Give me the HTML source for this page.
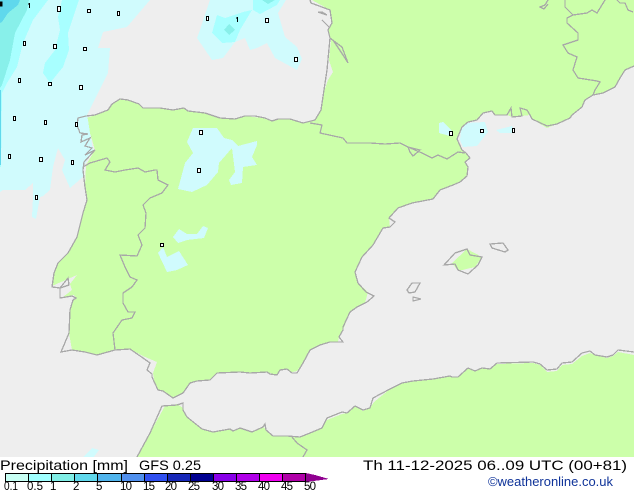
<!DOCTYPE html>
<html><head><meta charset="utf-8"><style>
html,body{margin:0;padding:0;background:#fff}
svg{display:block}
text{font-family:"Liberation Sans",sans-serif;fill:#000}
</style></head><body>
<svg width="634" height="490" viewBox="0 0 634 490" xmlns="http://www.w3.org/2000/svg">
<rect width="634" height="458" fill="#eeeeee"/>
<g shape-rendering="crispEdges">
<!-- land -->
<polygon fill="#ccffaa" points="312,0 330,10 332,23 328,30 331,40 329,60 333,72 328,80 324,92 321,110 315,120 303,123 290,119 278,119 272,121 262,118 245,116 235,119 220,118 205,113 188,111 184,108 173,110 160,108 143,108 139,104 128,100 120,99 112,104 108,110 95,115 86,118 90,133 95,150 86,165 85,187 87,200 83,213 77,237 68,253 58,263 54,273 52,286 77,275 70,284 72,290 63,297 74,295 76,298 73,300 70,310 69,333 72,350 85,352 97,355 115,350 130,349 143,356 157,362 153,373 155,385 158,390 163,391 173,397 183,393 190,383 197,381 210,380 217,373 240,372 250,373 267,372 277,375 280,370 287,369 292,372 297,371 303,363 310,350 320,345 330,342 338,342 339,337 343,330 345,325 350,312 357,307 365,303 368,292 358,283 355,272 362,257 373,245 383,228 390,227 389,218 398,208 412,203 433,199 440,190 453,185 460,182 467,176 468,167 465,162 470,158 466,153 462,150 457,139 462,127 468,122 477,120 484,112 492,111 495,115 507,115 512,117 522,116 530,115 532,119 547,128 557,124 570,118 572,115 582,107 585,100 593,95 603,93 615,87 620,78 625,70 634,66 634,0"/>
<!-- africa -->
<polygon fill="#ccffaa" points="137,458 150,433 165,406 177,404 183,408 187,417 202,429 213,432 230,429 233,431 240,428 252,432 263,427 266,430 273,436 287,436 300,437 310,433 322,428 327,420 342,414 347,413 355,406 363,411 370,408 374,402 390,389 402,383 413,381 433,379 450,376 452,377 458,377 468,368 475,371 482,368 490,369 497,364 533,363 540,365 547,372 557,371 562,365 572,364 582,356 590,353 595,355 607,358 613,356 618,352 634,355 634,458"/>
<!-- mallorca -->
<polygon fill="#ccffaa" points="452,263 467,249 482,257 475,267 458,271"/>
<!-- precip lightest -->
<polygon fill="#d0fbfd" points="150,0 127,27 103,32 98,48 110,48 108,73 87,115 88,120 90,133 93,150 83,167 83,177 70,188 62,170 65,160 58,148 53,167 50,190 43,196 40,197 36,219 32,217 33,197 33,183 25,190 3,190 0,192 0,0"/>
<polygon fill="#d0fbfd" points="210,0 200,30 197,38 212,60 223,58 235,42 245,38 250,50 257,48 267,43 275,58 297,70 302,59 297,47 285,37 278,13 286,0"/>
<polygon fill="#d0fbfd" points="193,128 217,128 224,138 232,140 238,146 257,141 257,145 252,157 257,165 243,167 242,183 231,185 229,180 235,172 232,148 219,163 218,172 207,185 192,192 178,189 185,163 193,153 187,142"/>
<polygon fill="#d0fbfd" points="179,229 187,234 197,234 203,226 208,228 204,238 187,240 178,243 173,237"/>
<polygon fill="#d0fbfd" points="163,247 167,257 179,251 188,265 177,270 167,272 158,253"/>
<polygon fill="#d0fbfd" points="439,123 443,122 452,131 450,136 439,133"/>
<polygon fill="#d0fbfd" points="461,130 467,123 485,122 488,132 477,146 463,147 460,140"/>
<polygon fill="#d0fbfd" points="496,130 512,126 515,133 500,133"/>
<polygon fill="#d0fbfd" points="82,458 92,448 99,450 93,458"/>
<!-- level 2 -->
<polygon fill="#a8ffff" points="48,0 33,20 23,43 17,67 7,83 2,93 1,167 0,167 0,0"/>
<polygon fill="#a8ffff" points="79,0 68,33 69,50 63,67 50,83 43,73 45,63 55,50 60,30 58,17 62,0"/>
<polygon fill="#a8ffff" points="212,33 217,15 225,18 243,12 252,10 240,30 235,42 222,43"/>
<polygon fill="#a8ffff" points="253,0 280,0 277,5 260,14 253,10"/>
<!-- level 3 -->
<polygon fill="#88f0ea" points="29,0 27,10 15,33 10,60 2,85 0,88 0,0"/>
<polygon fill="#88f0ea" points="229,24 235,30 229,35 224,30"/>
<polygon fill="#88f0ea" points="262,0 275,0 268,4"/>
<!-- level 4 -->
<polygon fill="#60d8ec" points="20,0 18,5 8,13 2,22 0,23 0,0"/>
<rect x="0" y="90" width="1" height="75" fill="#60d8ec"/>
</g>
<!-- coastlines -->
<g fill="none" stroke="#a8a8a8" stroke-width="1.3" shape-rendering="crispEdges">
<polyline points="310,0 311,3 330,10 332,23 328,30 330,38 327,70 324,90 321,110 315,120 303,123 290,119 278,119 272,121 265,118 255,116 245,116 235,119 220,118 205,113 188,111 184,108 173,110 160,108 143,108 139,104 128,100 120,99 112,104 108,110 95,115 86,116 78,118 77,125 80,133 88,134 82,135 81,142 90,138 85,146 92,148 85,155 95,150 84,162 83,170 85,187 87,200 83,213 77,237 68,253 58,263 54,273 52,287 60,288 68,278 69,285 60,288 60,298 72,296 76,298 73,300 70,310 69,333 61,352 72,350 85,352 97,355 115,350 130,349 143,358 150,363 147,370 152,374 152,377 158,390 163,391 173,398 183,393 190,383 197,381 210,380 217,373 240,372 250,373 267,372 270,374 277,375 280,370 287,369 292,373 297,373 303,363 310,350 320,345 330,342 343,342 339,337 343,330 343,327 350,312 357,307 367,302 374,296 366,292 358,283 355,272 362,257 373,245 383,228 390,227 395,222 389,218 398,208 412,203 433,199 440,190 453,185 460,182 467,176 468,167 465,162 470,158 466,153 462,150 457,139 462,127 468,122 477,120 483,113 492,111 495,115 507,115 511,108 512,117 522,116 520,108 527,110 530,115 532,119 547,126 557,124 570,118 572,115 582,107 585,100 593,95 603,93 615,87 620,78 625,70 634,66"/>
<polyline points="137,457 150,433 162,406 177,405 183,403 183,410 187,417 202,429 213,432 230,429 233,431 240,428 252,432 263,427 265,424 266,430 273,436 287,436 300,437 310,433 322,428 327,418 342,412 347,413 355,406 363,410 370,408 373,398 390,389 402,383 413,381 433,379 450,376 452,377 458,377 468,368 475,371 482,368 490,369 497,363 533,362 540,364 547,370 557,369 562,363 572,362 582,353 590,351 595,355 607,357 613,355 618,350 634,352"/>
<polyline points="292,437 297,443 307,450 303,457"/>
<polyline points="310,123 322,125 320,133 343,138 347,143 357,143 370,143 385,144 400,143 408,147 420,150 413,156 410,152 408,147 422,153 432,158 438,155 447,159 458,152 465,153"/>
<polyline points="330,38 342,47 348,63 343,55 333,40"/>
<polyline points="83,167 90,163 107,158 110,162 105,170 115,172 125,170 138,168 145,172 155,170 157,170 158,180 168,185 162,193 150,198 143,205 146,213 145,228 138,235 142,245 137,256 120,255 125,267 130,277 137,280 132,287 123,293 123,303 128,312 135,312 132,318 122,320 113,333 115,350"/>
<polyline points="565,0 565,7 573,15 587,13 592,10 597,13 605,0"/>
<polyline points="573,15 567,18 567,23 578,33 578,40 563,45 568,53 577,57 573,70 578,78 597,81 600,82 595,90 593,95"/>
<polyline points="617,0 620,3 625,3 628,10 633,12"/>
<polyline points="548,0 545,5 540,7 544,9 548,4"/>
<polygon points="444,265 455,253 467,249 470,255 482,257 478,265 468,274 458,270 455,264"/>
<polygon points="490,244 503,243 508,250 505,252 492,248"/>
<polygon points="407,290 412,283 420,283 415,292 409,293"/>
<polygon points="413,297 421,299 413,301"/>
<polyline points="318,12 327,15 322,12 318,12"/>
<polyline points="322,20 330,28"/>
</g>
<!-- station markers -->
<g fill="#fff" stroke="#000" stroke-width="1" shape-rendering="crispEdges">
<rect x="57.500" y="6.500" width="3" height="5"/>
<rect x="87.500" y="9.500" width="3" height="3"/>
<rect x="117.500" y="11.500" width="2" height="4"/>
<rect x="23.500" y="41.500" width="2" height="4"/>
<rect x="53.500" y="44.500" width="3" height="4"/>
<rect x="83.500" y="47.500" width="3" height="3"/>
<rect x="18.500" y="78.500" width="2" height="4"/>
<rect x="48.500" y="82.500" width="3" height="3"/>
<rect x="79.500" y="85.500" width="3" height="4"/>
<rect x="13.500" y="116.500" width="2" height="4"/>
<rect x="44.500" y="120.500" width="2" height="4"/>
<rect x="75.500" y="122.500" width="2" height="4"/>
<rect x="8.500" y="154.500" width="2" height="4"/>
<rect x="39.500" y="157.500" width="3" height="4"/>
<rect x="71.500" y="160.500" width="2" height="4"/>
<rect x="35.500" y="195.500" width="2" height="4"/>
<rect x="206.500" y="16.500" width="2" height="4"/>
<rect x="265.500" y="18.500" width="3" height="4"/>
<rect x="294.500" y="57.500" width="3" height="4"/>
<rect x="199.500" y="130.500" width="3" height="4"/>
<rect x="197.500" y="168.500" width="3" height="4"/>
<rect x="160.500" y="243.500" width="3" height="3"/>
<rect x="449.500" y="131.500" width="3" height="4"/>
<rect x="480.500" y="129.500" width="3" height="3"/>
<rect x="512.500" y="128.500" width="2" height="4"/>
</g>
<g stroke="#000" stroke-width="1" shape-rendering="crispEdges">
<path d="M29.500 3V8M28 4H29"/>
<path d="M237.500 17V22M236 18H237"/>
<path d="M0 2H2V6H0"/>
</g>
<!-- footer -->
<rect y="457" width="634" height="33" fill="#fff"/>
<g shape-rendering="crispEdges">
<polygon fill="#900090" points="306,473 315,475 329,479 306,482"/>
<rect x="5" y="473" width="23" height="8" fill="#c8fff4"/>
<rect x="28" y="473" width="23" height="8" fill="#a0ffff"/>
<rect x="51" y="473" width="23" height="8" fill="#80eee6"/>
<rect x="74" y="473" width="23" height="8" fill="#60d8ec"/>
<rect x="97" y="473" width="24" height="8" fill="#50b4ec"/>
<rect x="121" y="473" width="23" height="8" fill="#5090ee"/>
<rect x="144" y="473" width="23" height="8" fill="#3050f0"/>
<rect x="167" y="473" width="23" height="8" fill="#1828b8"/>
<rect x="190" y="473" width="23" height="8" fill="#000090"/>
<rect x="213" y="473" width="23" height="8" fill="#8800e8"/>
<rect x="236" y="473" width="23" height="8" fill="#b000e8"/>
<rect x="259" y="473" width="23" height="8" fill="#f000f0"/>
<rect x="282" y="473" width="24" height="8" fill="#b000a8"/>
<path fill="none" stroke="#000" stroke-width="1" d="M5.500 473.500H305.500V481.500H5.500ZM28.500 473V481M51.500 473V481M74.500 473V481M97.500 473V481M121.500 473V481M144.500 473V481M167.500 473V481M190.500 473V481M213.500 473V481M236.500 473V481M259.500 473V481M282.500 473V481"/>
</g>
<text x="0" y="470" font-size="14" textLength="128" lengthAdjust="spacingAndGlyphs">Precipitation [mm]</text>
<text x="139" y="470" font-size="14" textLength="62" lengthAdjust="spacingAndGlyphs">GFS 0.25</text>
<text x="363" y="470" font-size="14" textLength="264" lengthAdjust="spacingAndGlyphs">Th 11-12-2025 06..09 UTC (00+81)</text>
<text x="488" y="486" font-size="12.500" textLength="125" lengthAdjust="spacingAndGlyphs" style="fill:#0f3399">©weatheronline.co.uk</text>
<g font-size="11.500">
<text x="4" y="490" textLength="14" lengthAdjust="spacingAndGlyphs">0.1</text>
<text x="27" y="490" textLength="16" lengthAdjust="spacingAndGlyphs">0.5</text>
<text x="50" y="490">1</text>
<text x="73" y="490">2</text>
<text x="96" y="490">5</text>
<text x="120" y="490" textLength="12">10</text>
<text x="143" y="490" textLength="12">15</text>
<text x="165" y="490" textLength="12">20</text>
<text x="188" y="490" textLength="12">25</text>
<text x="212" y="490" textLength="12">30</text>
<text x="235" y="490" textLength="12">35</text>
<text x="258" y="490" textLength="12">40</text>
<text x="281" y="490" textLength="12">45</text>
<text x="304" y="490" textLength="12">50</text>
</g>
</svg>
</body></html>
